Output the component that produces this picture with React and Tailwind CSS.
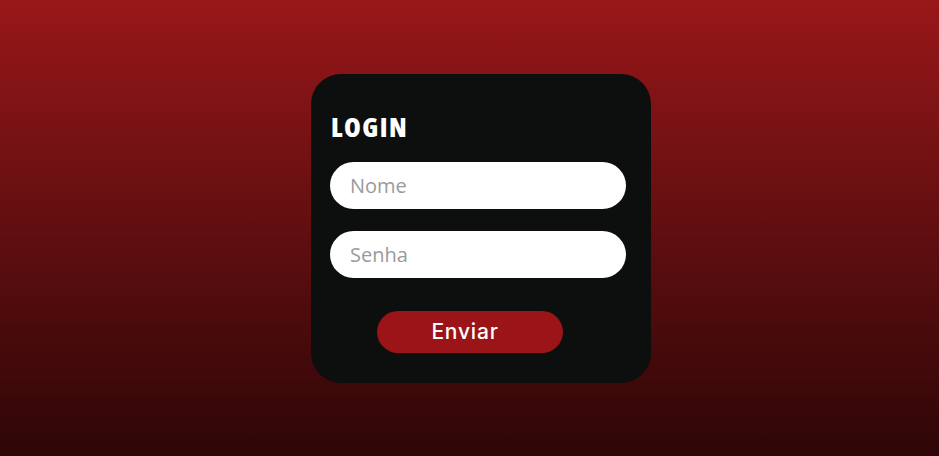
import React from "react"

const App = () => {
  return (
    <div className="w-full h-[456px] flex items-center justify-center pl-[23px] bg-gradient-to-b from-[#991719] to-[#2f0607]">
      <div className="w-[340px] h-[309px] rounded-[30px] bg-[#0d0f0e] pl-[19px] pt-[38px] flex flex-col">
        <h1 className="text-white text-[27px] leading-[30px] font-extrabold font-stretch-semi-condensed tracking-[1.5px] pl-[1px] font-['Open_Sans',sans-serif]">
          LOGIN
        </h1>
        <input
          placeholder="Nome"
          className="mt-[20px] w-[296px] h-[47px] rounded-full bg-white px-5 text-[20px] text-gray-700 placeholder:text-[#9a9a9a] outline-none font-['Open_Sans',sans-serif]"
        />
        <input
          placeholder="Senha"
          type="password"
          className="mt-[22px] w-[296px] h-[47px] rounded-full bg-white px-5 text-[20px] text-gray-700 placeholder:text-[#9a9a9a] outline-none font-['Open_Sans',sans-serif]"
        />
        <button className="mt-[33px] ml-[47px] w-[186px] h-[42px] rounded-full bg-[#9b1518] text-white text-[21px] font-medium tracking-[0.8px] pr-[10px] font-['Inter',sans-serif]">
          Enviar
        </button>
      </div>
    </div>
  )
}

export default App
